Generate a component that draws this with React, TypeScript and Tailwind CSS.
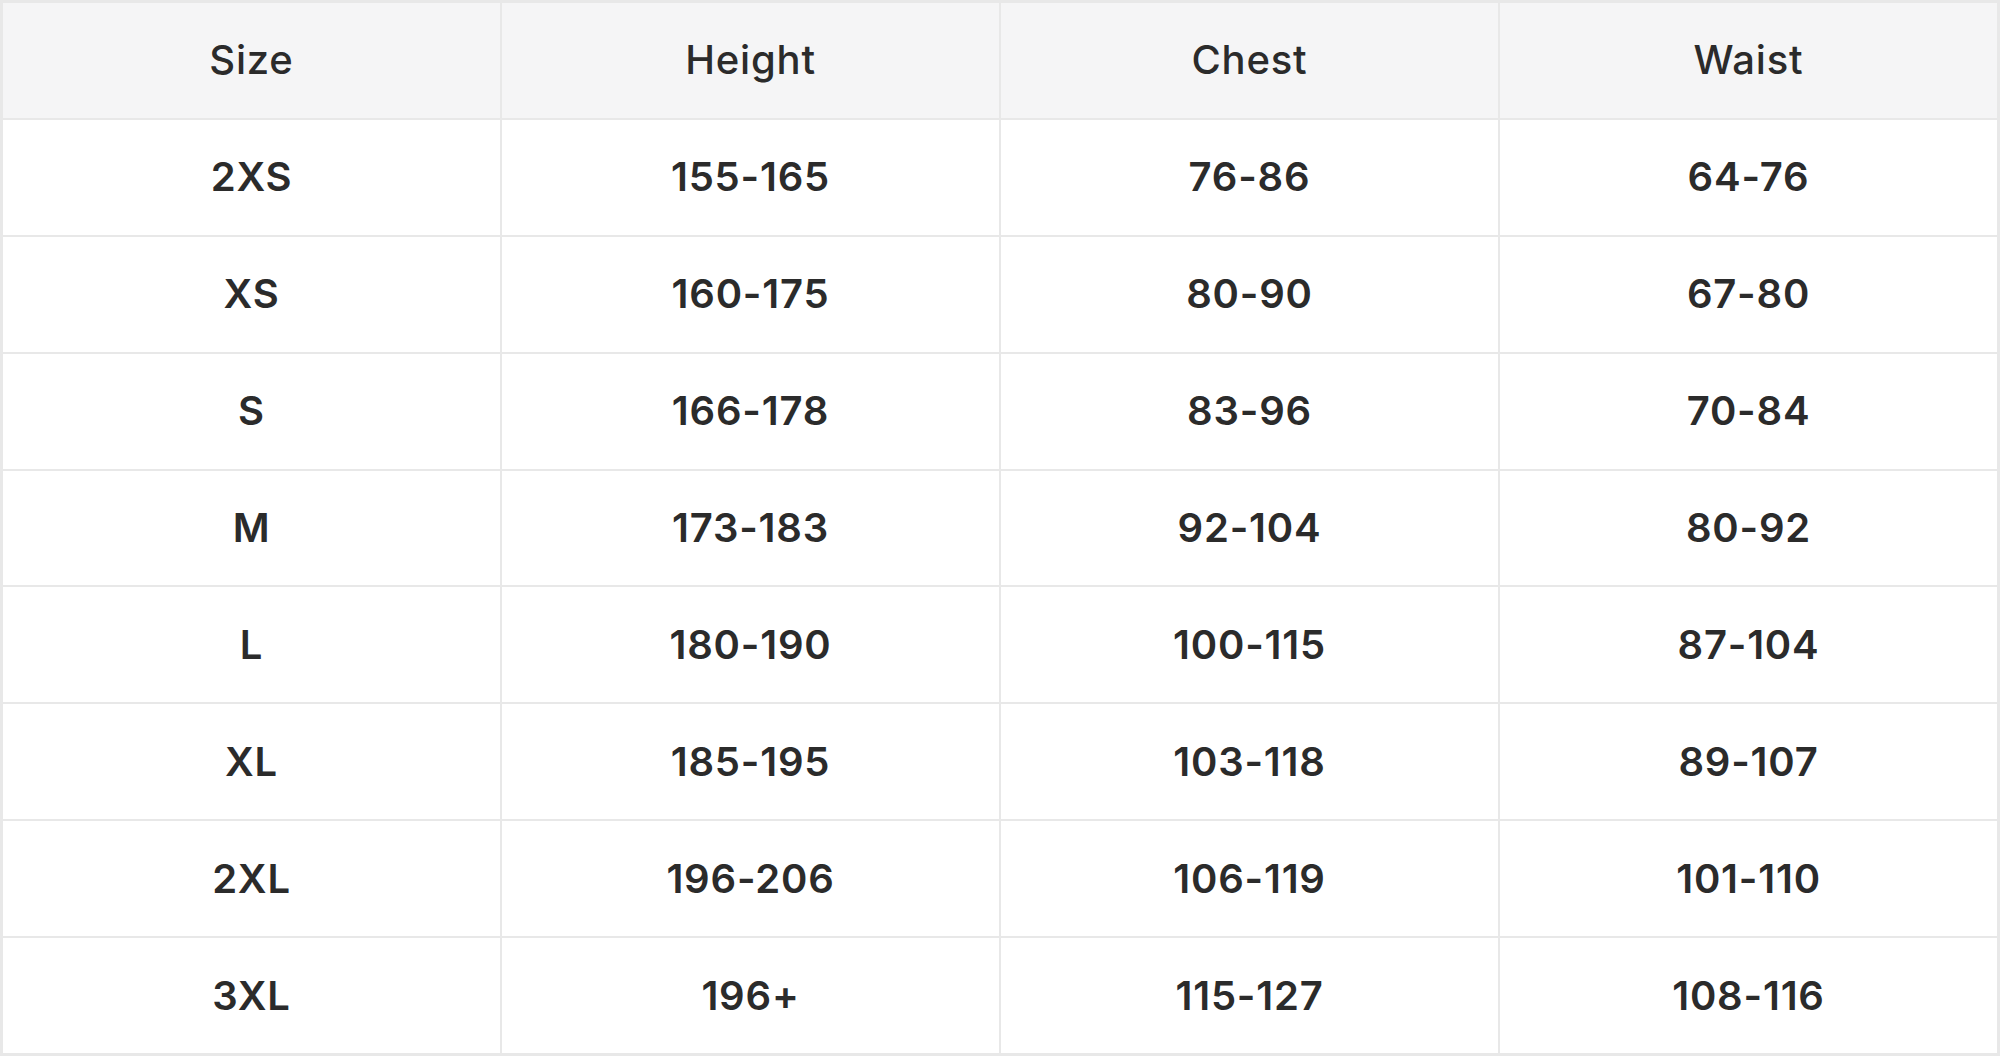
const headers = ["Size", "Height", "Chest", "Waist"];

const rows = [
  ["2XS", "155-165", "76-86", "64-76"],
  ["XS", "160-175", "80-90", "67-80"],
  ["S", "166-178", "83-96", "70-84"],
  ["M", "173-183", "92-104", "80-92"],
  ["L", "180-190", "100-115", "87-104"],
  ["XL", "185-195", "103-118", "89-107"],
  ["2XL", "196-206", "106-119", "101-110"],
  ["3XL", "196+", "115-127", "108-116"],
];

export default function App() {
  return (
    <div className="w-[2000px] h-[1056px] bg-white font-['Inter','Liberation_Sans',sans-serif] text-[40px] tracking-[0.02em] text-[#2b2b2b]">
      {/* grid gaps show the bg colour and act as cell borders */}
      <div className="w-full h-full grid grid-cols-4 grid-rows-9 gap-[2px] bg-[#e8e8e8] border-[3px] border-[#e8e8e8]">
        {headers.map((h) => (
          <div key={h} className="flex items-center justify-center bg-[#f5f5f6] font-medium">
            {h}
          </div>
        ))}
        {rows.map((row) =>
          row.map((cell, i) => (
            <div key={row[0] + i} className="flex items-center justify-center bg-white font-semibold">
              {cell}
            </div>
          ))
        )}
      </div>
    </div>
  );
}
